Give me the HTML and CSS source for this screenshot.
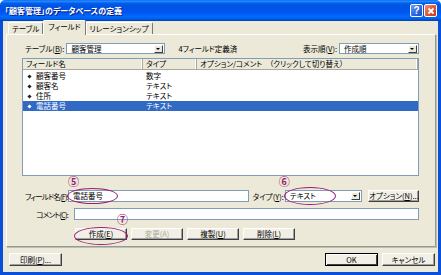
FILE: index.html
```html
<!DOCTYPE html>
<html lang="ja">
<head>
    <meta charset="UTF-8">
    <title>「顧客管理」のデータベースの定義</title>
    <link rel="stylesheet" href="styles.css">
</head>
<body>
    <div class="window">
        <div class="titlebar">
            <span class="title">「顧客管理」のデータベースの定義</span>
            <div class="caption-btns">
                <span class="cap-btn help">?</span>
                <span class="cap-btn close">
                    <svg viewBox="0 0 10 10"><path d="M2.5 2.5 L7.5 7.5 M7.5 2.5 L2.5 7.5"/></svg>
                </span>
            </div>
        </div>

        <div class="frame">
            <div class="tabctl">
                <div class="tabs">
                    <span class="tab">テーブル</span>
                    <span class="tab active">フィールド</span>
                    <span class="tab">リレーションシップ</span>
                </div>

                <div class="panel">
                    <div class="row top-row">
                        <span class="label">テーブル(<u>B</u>):</span>
                        <div class="combo table-combo">
                            <span class="combo-text">顧客管理</span>
                            <span class="combo-arrow"></span>
                        </div>
                        <span class="info">4フィールド定義済</span>
                        <span class="spacer"></span>
                        <span class="label">表示順(<u>V</u>):</span>
                        <div class="combo order-combo">
                            <span class="combo-text">作成順</span>
                            <span class="combo-arrow"></span>
                        </div>
                    </div>

                    <div class="list">
                        <div class="list-head">
                            <span class="col col-name">フィールド名</span>
                            <span class="col col-type">タイプ</span>
                            <span class="col col-opt">オプション/コメント　（クリックして切り替え）</span>
                        </div>
                        <div class="list-row">
                            <span class="col col-name"><i class="key"></i>顧客番号</span>
                            <span class="col col-type">数字</span>
                            <span class="col col-opt"></span>
                        </div>
                        <div class="list-row">
                            <span class="col col-name"><i class="key"></i>顧客名</span>
                            <span class="col col-type">テキスト</span>
                            <span class="col col-opt"></span>
                        </div>
                        <div class="list-row">
                            <span class="col col-name"><i class="key"></i>住所</span>
                            <span class="col col-type">テキスト</span>
                            <span class="col col-opt"></span>
                        </div>
                        <div class="list-row selected">
                            <span class="col col-name"><i class="key"></i>電話番号</span>
                            <span class="col col-type">テキスト</span>
                            <span class="col col-opt"></span>
                        </div>
                    </div>

                    <div class="row field-row">
                        <span class="label wide">フィールド名(<u>F</u>):</span>
                        <div class="input name-input">
                            <span class="input-text">電話番号</span>
                            <span class="mark mark-5">⑤</span>
                            <span class="ring ring-5"></span>
                        </div>
                        <span class="label type-label">タイプ(<u>Y</u>):</span>
                        <div class="combo type-combo">
                            <span class="combo-text">テキスト</span>
                            <span class="combo-arrow"></span>
                            <span class="mark mark-6">⑥</span>
                            <span class="ring ring-6"></span>
                        </div>
                        <button class="btn option-btn">オプション(<u>N</u>)...</button>
                    </div>

                    <div class="row comment-row">
                        <span class="label wide">コメント(<u>C</u>):</span>
                        <div class="input comment-input"></div>
                    </div>

                    <div class="row action-row">
                        <button class="btn create-btn">作成(<u>E</u>)
                            <span class="mark mark-7">⑦</span>
                            <span class="ring ring-7"></span>
                        </button>
                        <button class="btn" disabled>変更(<u>A</u>)</button>
                        <button class="btn">複製(<u>U</u>)</button>
                        <button class="btn">削除(<u>L</u>)</button>
                    </div>
                </div>
            </div>

            <div class="footer">
                <button class="btn">印刷(<u>P</u>)...</button>
                <span class="spacer"></span>
                <button class="btn default">OK</button>
                <button class="btn">キャンセル</button>
            </div>
        </div>
    </div>
</body>
</html>
```

FILE: styles.css
```css
* {
    margin: 0;
    padding: 0;
    box-sizing: border-box;
}

body {
    font-family: "Noto Sans CJK JP", "Liberation Sans", sans-serif;
    font-size: 7.5px;
    font-feature-settings: "palt";
    color: #000;
    background: #fff;
}

u {
    text-decoration: underline;
    text-underline-offset: 1px;
}

.window {
    width: 441px;
    height: 275px;
    display: flex;
    flex-direction: column;
}

/* title bar */
.titlebar {
    height: 21px;
    display: flex;
    align-items: center;
    padding: 0 4px 0 5px;
    border-radius: 5px 5px 0 0;
    background: linear-gradient(to bottom, #0058ee 0%, #3593ff 5%, #127dff 9%, #0262ee 15%, #0057e5 22%, #0054e3 30%, #0055eb 56%, #005bf5 66%, #026afe 78%, #0062ef 88%, #0052d6 94%, #0040ab 100%);
}

.title {
    color: #fff;
    font-weight: bold;
    font-size: 8px;
    text-shadow: 1px 1px #0a1883;
    flex: 1;
}

.caption-btns {
    display: flex;
    gap: 1px;
}

.cap-btn {
    width: 13px;
    height: 13px;
    border: 1px solid #fff;
    border-radius: 2px;
    display: flex;
    align-items: center;
    justify-content: center;
    color: #fff;
    font-family: "Liberation Sans", sans-serif;
    font-weight: bold;
    font-size: 10px;
}

.help {
    background: linear-gradient(135deg, #6b9ff7, #2a63e0 60%, #1a4fc9);
}

.close {
    background: linear-gradient(135deg, #f0927a, #e0532d 55%, #c43b1a);
}

.close svg {
    width: 10px;
    height: 10px;
    stroke: #fff;
    stroke-width: 1.8;
}

/* window body */
.frame {
    flex: 1;
    display: flex;
    flex-direction: column;
    background: #ece9d8;
    border: 3px solid #0a4fdc;
    border-top: 0;
}

.tabctl {
    margin: 0 2px 0 3px;
}

.tabs {
    height: 13px;
    display: flex;
    align-items: flex-end;
    padding-left: 2px;
}

.tab {
    height: 12px;
    line-height: 11px;
    padding: 0 3px;
    border: 1px solid #fff;
    border-right-color: #7a7a7a;
    border-bottom: 0;
    border-radius: 2px 2px 0 0;
    white-space: nowrap;
}

.tab.active {
    height: 15px;
    margin-bottom: -1px;
    padding: 0 4px;
    background: #ece9d8;
    position: relative;
    z-index: 1;
    line-height: 12px;
}

.panel {
    height: 213px;
    border: 1px solid #fff;
    border-right-color: #919b9c;
    border-bottom-color: #919b9c;
    box-shadow: 1px 1px #c2bfa9;
    padding: 8px 16px 0 15px;
    display: flex;
    flex-direction: column;
}

.row {
    display: flex;
    align-items: center;
}

.spacer {
    flex: 1;
}

.label {
    white-space: nowrap;
    flex: none;
}

.label.wide {
    width: 46px;
    text-align: right;
    letter-spacing: -0.8px;
}

/* combos and inputs */
.combo,
.input {
    position: relative;
    height: 12px;
    background: #fff;
    border: 1px solid #7f9db9;
    display: flex;
    align-items: center;
}

.combo-text,
.input-text {
    flex: 1;
    padding-left: 4px;
    line-height: 10px;
    white-space: nowrap;
}

.combo-arrow {
    width: 9px;
    height: 8px;
    margin-right: 1px;
    background: #ece9d8;
    border: 1px solid #fff;
    border-right-color: #404040;
    border-bottom-color: #404040;
    position: relative;
}

.combo-arrow::after {
    content: "";
    position: absolute;
    left: 1px;
    top: 2px;
    border-left: 2.5px solid transparent;
    border-right: 2.5px solid transparent;
    border-top: 2.5px solid #000;
}

.top-row {
    height: 11px;
    padding-left: 3px;
}

.table-combo {
    width: 99px;
    height: 11px;
    margin-left: 2px;
}

.info {
    margin-left: 13px;
}

.order-combo {
    width: 80px;
    height: 11px;
    margin-left: 2px;
}

/* field list */
.list {
    margin-top: 4px;
    height: 118px;
    background: #fff;
    border: 1px solid #7f9db9;
}

.list-head,
.list-row {
    display: flex;
}

.list-head {
    height: 11px;
    line-height: 10px;
    background: #ece9d8;
    border-bottom: 1px solid #aca899;
    margin-bottom: 1px;
}

.list-head .col {
    border-right: 1px solid #aca899;
    box-shadow: inset -1px 0 #fff;
    padding-left: 3px;
}

.list-row {
    height: 10px;
    line-height: 10px;
}

.col {
    white-space: nowrap;
    overflow: hidden;
}

.col-name {
    width: 120px;
    display: flex;
    align-items: center;
}

.list-row .col-name {
    padding-left: 5px;
}

.col-type {
    width: 54px;
    padding-left: 3px;
}

.col-opt {
    flex: 1;
    padding-left: 3px;
}

.key {
    width: 3px;
    height: 3px;
    background: #222;
    transform: rotate(45deg);
    margin-right: 5px;
}

.list-row.selected {
    background: #316ac5;
    color: #fff;
}

.list-row.selected .key {
    background: #fff;
}

/* form fields */
.field-row {
    margin-top: 14px;
    height: 12px;
}

.name-input {
    width: 185px;
}

.type-label {
    margin-left: 4px;
}

.type-combo {
    width: 79px;
    margin-left: 1px;
}

.comment-row {
    margin-top: 6px;
    height: 12px;
}

.comment-input {
    flex: 1;
    margin-left: 6px;
}

/* buttons */
.btn {
    position: relative;
    width: 52px;
    height: 12px;
    font: inherit;
    line-height: 10px;
    color: #000;
    background: #f1efe6;
    border: 1px solid #fff;
    border-right-color: #404040;
    border-bottom-color: #404040;
    box-shadow: inset -1px -1px #a0a0a0;
    white-space: nowrap;
}

.btn:disabled {
    color: #aca899;
}

.option-btn {
    width: 51px;
    margin-left: 6px;
}

.action-row {
    margin-top: 8px;
    height: 12px;
    padding-left: 53px;
    gap: 4px;
}

.footer {
    display: flex;
    gap: 4px;
    padding: 6px 3px 0 6px;
}

.footer .btn {
    width: 53px;
    height: 13px;
}

.footer .btn.default {
    border: 1px solid #000;
    box-shadow: inset 1px 1px #fff, inset -1px -1px #404040;
}

/* annotations */
.mark {
    position: absolute;
    color: #9a1c78;
    font-size: 11px;
    font-weight: bold;
    line-height: 11px;
}

.ring {
    position: absolute;
    border: 1.5px solid #9a1c78;
    border-radius: 50%;
}

.mark-5 {
    left: -1px;
    top: -15px;
}

.ring-5 {
    left: -2px;
    top: -3px;
    width: 51px;
    height: 16px;
}

.mark-6 {
    left: -7px;
    top: -15px;
}

.ring-6 {
    left: -2px;
    top: -4px;
    width: 52px;
    height: 18px;
}

.mark-7 {
    left: 41px;
    top: -15px;
}

.ring-7 {
    left: -2px;
    top: -2px;
    width: 54px;
    height: 18px;
}
```
